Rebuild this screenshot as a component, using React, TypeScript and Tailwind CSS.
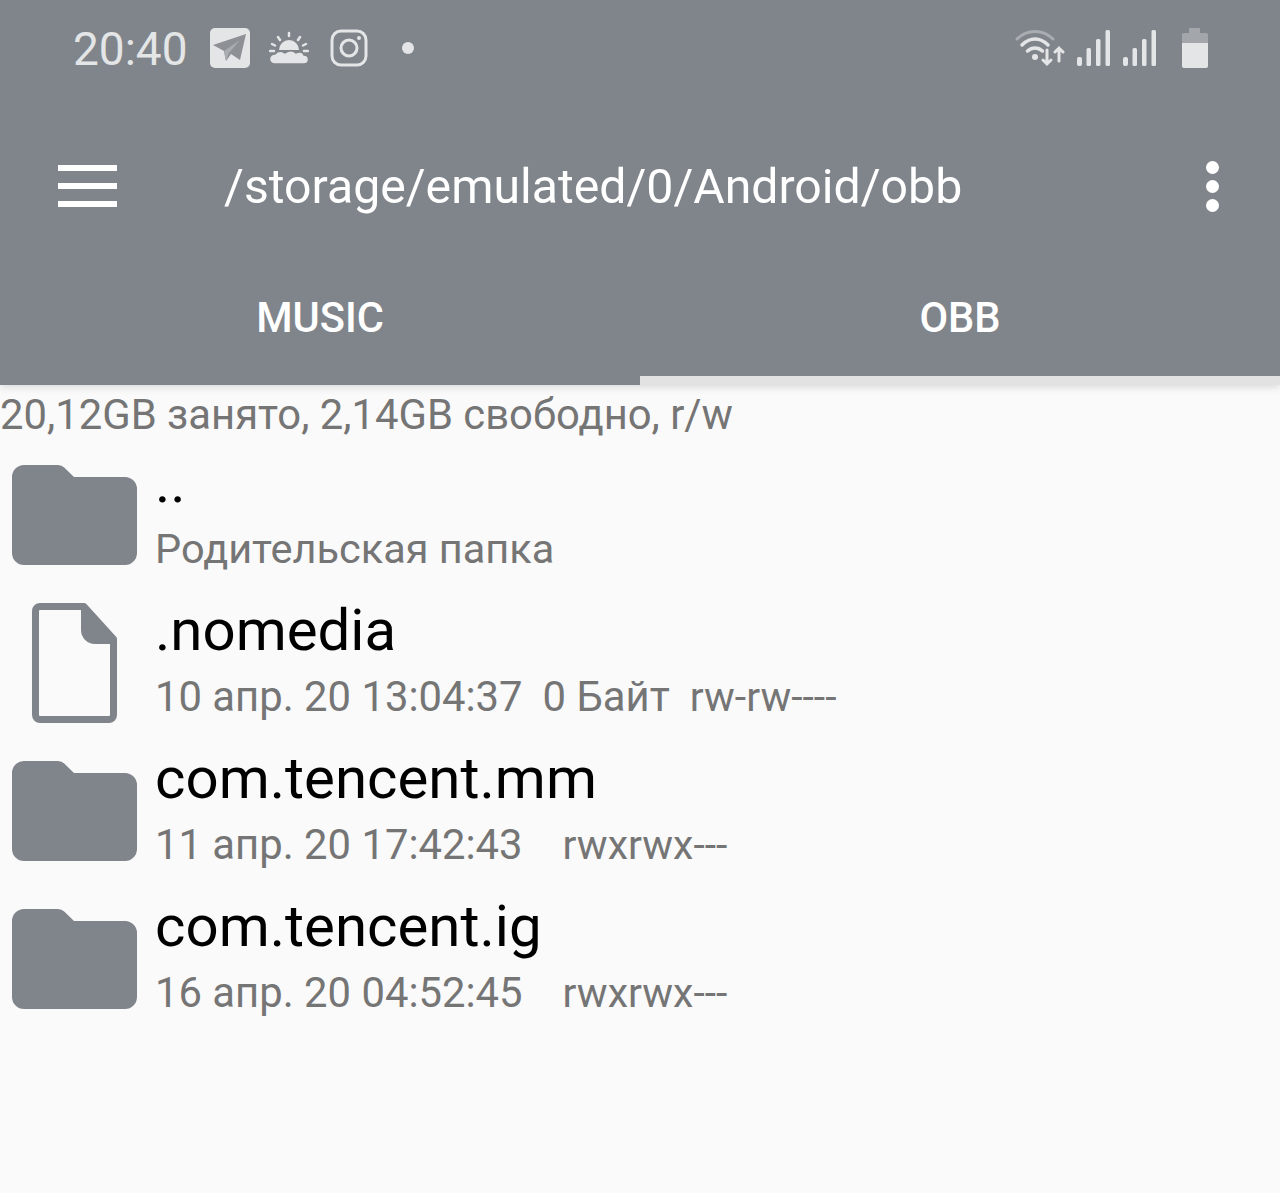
import React from "react";

const BAR = "#80858b";

function Telegram() {
  return (
    <svg width="40" height="40" viewBox="0 0 40 40">
      <rect width="40" height="40" rx="5" fill="#e4e5e6" />
      <path d="M3 17 L36 6 L30 32 L21 26 L16 33 L14 23 Z" fill="#8d9196" />
      <path d="M14 23 L30 12 L19 25 L16 33 Z" fill="#a9acb0" />
    </svg>
  );
}

function Weather() {
  return (
    <svg width="40" height="36" viewBox="0 0 40 36" fill="none" stroke="#e4e5e6" strokeLinecap="round">
      <path d="M10 20 A10 10 0 0 1 30 20 Z" fill="#e4e5e6" stroke="none" />
      <path d="M20 3v3M9 7l2 3M31 7l-2 3M3 14l3 1.500M37 14l-3 1.500M1 21h4M35 21h4" strokeWidth="2.500" />
      <path d="M5 34 a5 5 0 0 1 1-10 c3-4 8-3 10-1 c4-3 8-3 11 0 c3-2 7-1 8 2 a4.500 4.500 0 0 1 0 9 Z" fill="#e4e5e6" stroke={BAR} strokeWidth="1.500" />
    </svg>
  );
}

function Instagram() {
  return (
    <svg width="38" height="38" viewBox="0 0 38 38" fill="none" stroke="#e4e5e6" strokeWidth="3">
      <rect x="2" y="2" width="34" height="34" rx="9" />
      <circle cx="19" cy="19" r="8" />
      <circle cx="29" cy="9" r="2" fill="#e4e5e6" stroke="none" />
    </svg>
  );
}

function Wifi() {
  return (
    <svg width="50" height="38" viewBox="0 0 50 38" fill="none" strokeLinecap="round">
      <path d="M2 10 C12 0 28 0 38 10" stroke="#a9acb0" strokeWidth="3" />
      <path d="M7 16 C15 8 25 8 33 16" stroke="#e4e5e6" strokeWidth="3.500" />
      <path d="M12.500 22 C17 18 23 18 27.500 22" stroke="#e4e5e6" strokeWidth="3.500" />
      <circle cx="20" cy="28" r="3" fill="#e4e5e6" />
      <path d="M32 21v14M28 31l4 4 4-4" stroke="#e4e5e6" strokeWidth="3" />
      <path d="M44 32V19M40 23l4-4 4 4" stroke="#e4e5e6" strokeWidth="3" />
    </svg>
  );
}

function Signal() {
  return (
    <svg width="34" height="36" viewBox="0 0 34 36" fill="#e4e5e6">
      <rect x="0" y="27" width="5" height="9" rx="2" />
      <rect x="9.500" y="18" width="4.500" height="18" rx="1.500" />
      <rect x="19" y="9" width="4.500" height="27" rx="1.500" />
      <rect x="28.500" y="0" width="4.500" height="36" rx="1.500" />
    </svg>
  );
}

function Battery() {
  return (
    <svg width="26" height="40" viewBox="0 0 26 40">
      <path d="M7 0h11v5h6a2 2 0 0 1 2 2v8H0V7a2 2 0 0 1 2-2h5Z" fill="#a3a6aa" />
      <path d="M0 15h26v23a2 2 0 0 1-2 2H2a2 2 0 0 1-2-2Z" fill="#e4e5e6" />
    </svg>
  );
}

function Folder() {
  return (
    <svg width="125" height="100" viewBox="0 0 125 100" fill={BAR}>
      <path d="M12 0H46a9 9 0 0 1 6.500 2.800L62 12H113a12 12 0 0 1 12 12V88a12 12 0 0 1-12 12H12A12 12 0 0 1 0 88V12A12 12 0 0 1 12 0Z" />
    </svg>
  );
}

function FileIcon() {
  return (
    <svg width="85" height="120" viewBox="0 0 85 120">
      <path d="M8 3.500H52L81.500 36V112a4.500 4.500 0 0 1-4.500 4.500H8A4.500 4.500 0 0 1 3.500 112V8A4.500 4.500 0 0 1 8 3.500Z" fill="#fafafa" stroke={BAR} strokeWidth="7" strokeLinejoin="round" />
      <path d="M49 3H54L85 36V41H63A14 14 0 0 1 49 27Z" fill={BAR} />
    </svg>
  );
}

const rows = [
  { icon: "folder", name: "..", sub: ["Родительская папка"] },
  { icon: "file", name: ".nomedia", sub: ["10 апр. 20 13:04:37", "0 Байт", "rw-rw----"] },
  { icon: "folder", name: "com.tencent.mm", sub: ["11 апр. 20 17:42:43", "", "rwxrwx---"] },
  { icon: "folder", name: "com.tencent.ig", sub: ["16 апр. 20 04:52:45", "", "rwxrwx---"] },
];

export default function App() {
  return (
    <div className="h-[1193px] w-[1280px] overflow-hidden bg-[#fafafa] font-['Roboto',sans-serif]">
      <header className="relative bg-[#80858b] shadow-[0_2px_8px_rgba(0,0,0,0.14)]">
        <div className="flex h-[96px] items-center justify-between pl-[73px] pr-[72px]">
          <div className="flex items-center">
            <span className="w-[137px] pt-[2px] text-[46px] leading-none text-[#e4e5e6]">20:40</span>
            <Telegram />
            <span className="ml-[19px] flex"><Weather /></span>
            <span className="ml-[21px] flex"><Instagram /></span>
            <span className="ml-[34px] h-[12px] w-[12px] rounded-full bg-[#e4e5e6]" />
          </div>
          <div className="flex items-center">
            <Wifi />
            <span className="ml-[12px] flex"><Signal /></span>
            <span className="ml-[12px] flex"><Signal /></span>
            <span className="ml-[25px] flex"><Battery /></span>
          </div>
        </div>
        <div className="flex h-[180px] items-center pl-[58px] pr-[61px]">
          <div className="flex w-[59px] flex-col gap-[12px]">
            <span className="h-[6px] bg-white" />
            <span className="h-[6px] bg-white" />
            <span className="h-[6px] bg-white" />
          </div>
          <div className="ml-[107px] flex-1 pt-[2px] text-[48.2px] leading-none text-white">/storage/emulated/0/Android/obb</div>
          <div className="flex flex-col gap-[6px]">
            <span className="h-[13px] w-[13px] rounded-full bg-white" />
            <span className="h-[13px] w-[13px] rounded-full bg-white" />
            <span className="h-[13px] w-[13px] rounded-full bg-white" />
          </div>
        </div>
        <div className="grid h-[109px] grid-cols-2">
          <div className="flex flex-col">
            <div className="flex flex-1 items-center justify-center pb-[16px] text-[41.6px] font-medium leading-none text-white">MUSIC</div>
            <div className="h-[9px]" />
          </div>
          <div className="flex flex-col">
            <div className="flex flex-1 items-center justify-center pb-[16px] text-[41.6px] font-medium leading-none text-white">OBB</div>
            <div className="h-[9px] bg-[#e2e2e2]" />
          </div>
        </div>
      </header>
      <div className="flex h-[56px] items-start pt-[8px] text-[41.8px] leading-[44px] text-[#757575]">20,12GB занято, 2,14GB свободно, r/w</div>
      <ul>
        {rows.map((r) => (
          <li key={r.name} className="flex h-[148px] items-center">
            <div className="flex w-[155px] justify-center pr-[6px]">
              {r.icon === "folder" ? <Folder /> : <FileIcon />}
            </div>
            <div className="flex min-w-0 flex-col pb-[3px]">
              <div className="h-[70px] text-[58.2px] leading-[58px] text-black">{r.name}</div>
              <div className="flex h-[52px] gap-[20px] text-[41.8px] leading-[52px] text-[#757575]">
                {r.sub.map((s, i) => (
                  <span key={i} className={i === 2 ? "whitespace-nowrap text-[41px]" : r.sub.length === 1 ? "whitespace-nowrap text-[41.5px]" : "whitespace-nowrap"}>{s}</span>
                ))}
              </div>
            </div>
          </li>
        ))}
      </ul>
    </div>
  );
}
